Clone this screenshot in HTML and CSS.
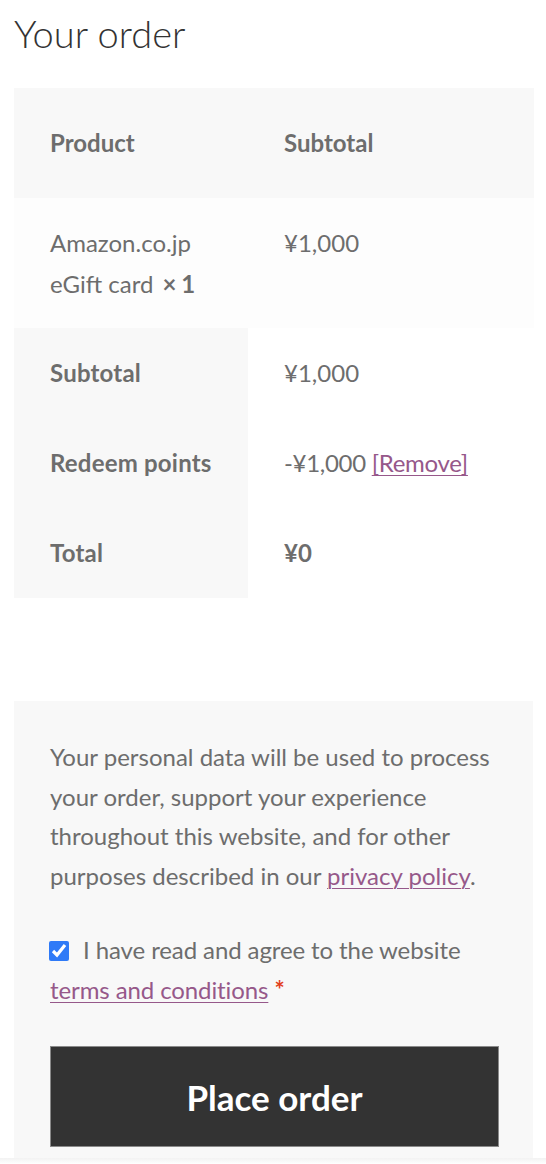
FILE: index.html
```html
<!DOCTYPE html>
<html lang="en">
<head>
<meta charset="utf-8">
<title>Your order</title>
<link rel="stylesheet" href="styles.css">
</head>
<body>
<div class="page">
  <h3 class="order-heading">Your order</h3>
  <table class="shop-table">
    <colgroup><col class="col-name"><col class="col-total"></colgroup>
    <thead>
      <tr><th>Product</th><th>Subtotal</th></tr>
    </thead>
    <tbody>
      <tr class="cart-item">
        <td>Amazon.co.jp eGift card&nbsp;<strong class="qty">&times;&nbsp;1</strong></td>
        <td>&yen;1,000</td>
      </tr>
    </tbody>
    <tfoot>
      <tr><th>Subtotal</th><td>&yen;1,000</td></tr>
      <tr><th>Redeem points</th><td class="discount">-&yen;1,000 <a href="#" class="link">[Remove]</a></td></tr>
      <tr><th>Total</th><td><strong>&yen;0</strong></td></tr>
    </tfoot>
  </table>

  <div class="payment">
    <p class="privacy">Your personal data will be used to process your order, support your experience throughout this website, and for other purposes described in our <a href="#" class="link">privacy policy</a>.</p>
    <label class="terms">
      <input type="checkbox" class="terms-check" checked>
      <span>I have read and agree to the website <a href="#" class="link">terms and conditions</a>&nbsp;<abbr class="required" title="required">*</abbr></span>
    </label>
    <button class="place-order" type="button">Place order</button>
  </div>
</div>
<div class="bottom-shade"></div>
</body>
</html>
```

FILE: styles.css
```css
html, body {
  margin: 0;
  padding: 0;
  background: #ffffff;
}

body {
  font-family: "Lato", "Liberation Sans", sans-serif;
  font-size: 24px;
  color: #6d6d6d;
}

.page {
  padding: 0 12px 0 14px;
}

.order-heading {
  margin: 0;
  padding-top: 11px;
  height: 77px;
  font-size: 38px;
  line-height: 44px;
  font-weight: 300;
  color: #333333;
}

.shop-table {
  width: 520px;
  table-layout: fixed;
  border-collapse: collapse;
  border-spacing: 0;
}

.col-name { width: 234px; }
.col-total { width: 286px; }

.shop-table th,
.shop-table td {
  text-align: left;
  vertical-align: top;
  padding: 25px 36px;
  line-height: 40px;
}

.shop-table th {
  font-weight: 700;
  background: #f8f8f8;
}

.shop-table thead th {
  padding: 34px 36px;
  line-height: 42px;
  vertical-align: middle;
}

.shop-table tbody td {
  background: #fdfdfd;
  padding: 24px 36px;
  line-height: 41px;
}

.shop-table tfoot td {
  background: #ffffff;
}

.shop-table tfoot th {
  letter-spacing: 0.2px;
}

.discount {
  letter-spacing: -0.3px;
}

.qty {
  font-weight: 700;
  margin-left: 3px;
  letter-spacing: -0.5px;
}

.link {
  color: #96588a;
  text-decoration: underline;
  text-underline-offset: 3px;
  text-decoration-thickness: 1px;
}

.payment {
  margin-top: 103px;
  background: #f8f8f8;
  padding: 36px 34px 40px 36px;
  box-sizing: content-box;
  width: 449px;
}

.privacy {
  margin: 0 0 35px;
  line-height: 39.5px;
}

.terms {
  display: block;
  line-height: 40px;
  letter-spacing: -0.1px;
}

.terms-check {
  width: 20px;
  height: 20px;
  margin: 0 8px 0 -1px;
  vertical-align: -2px;
  accent-color: #2f7af7;
}

.required {
  color: #e2401c;
  font-weight: 700;
  text-decoration: none;
  border: 0;
}

.place-order {
  display: block;
  margin-top: 36px;
  width: 449px;
  height: 101px;
  background: #333333;
  border: 1px solid #8a8a8a;
  color: #ffffff;
  font-family: inherit;
  font-size: 35px;
  font-weight: 700;
  cursor: pointer;
}

.bottom-shade {
  position: fixed;
  left: 0;
  right: 0;
  bottom: 0;
  height: 6px;
  background: linear-gradient(to bottom, #f2f2f2, #ffffff);
}
```
